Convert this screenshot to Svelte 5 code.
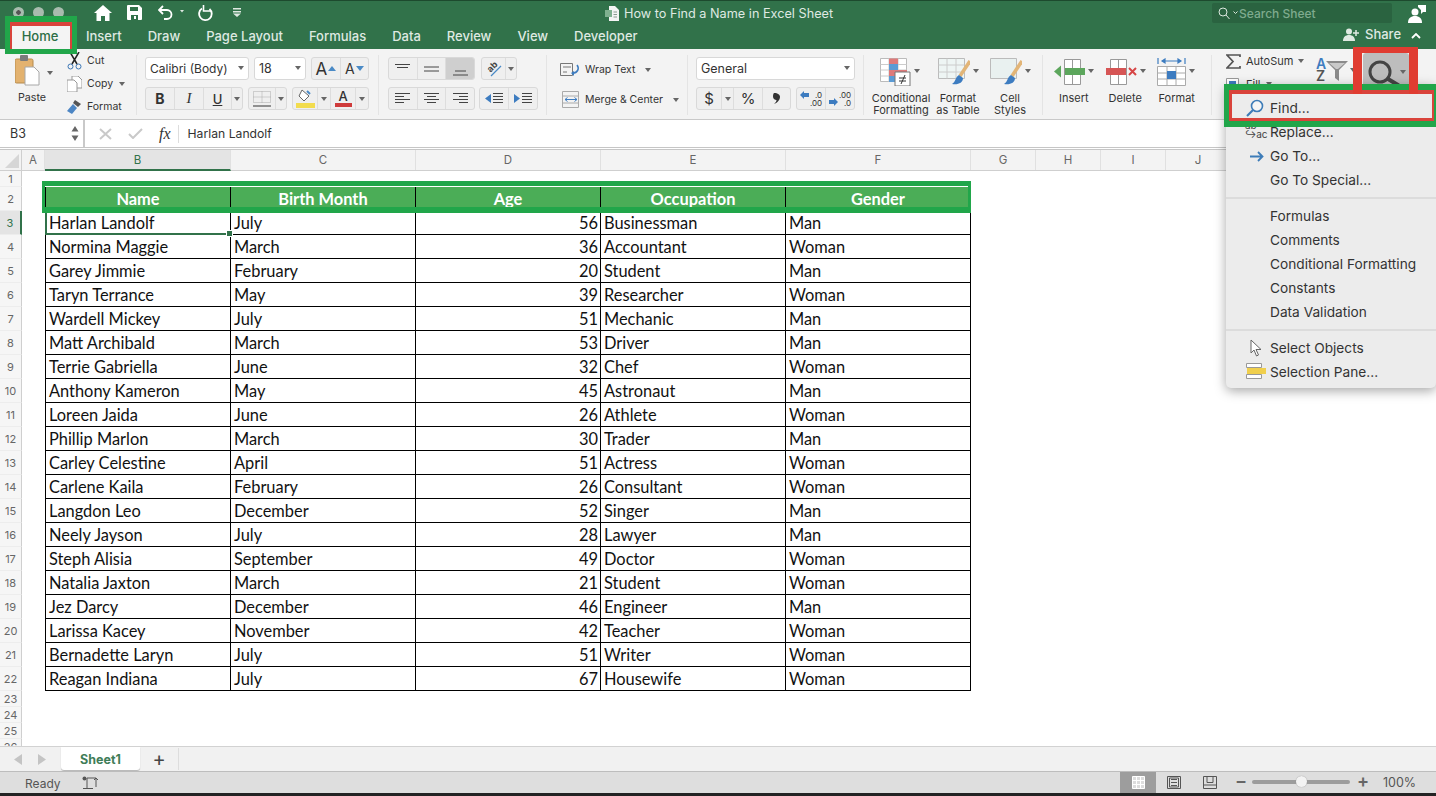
<script>
  const people = [
    ['Harlan Landolf','July',56,'Businessman','Man'],['Normina Maggie','March',36,'Accountant','Woman'],
    ['Garey Jimmie','February',20,'Student','Man'],['Taryn Terrance','May',39,'Researcher','Woman'],
    ['Wardell Mickey','July',51,'Mechanic','Man'],['Matt Archibald','March',53,'Driver','Man'],
    ['Terrie Gabriella','June',32,'Chef','Woman'],['Anthony Kameron','May',45,'Astronaut','Man'],
    ['Loreen Jaida','June',26,'Athlete','Woman'],['Phillip Marlon','March',30,'Trader','Man'],
    ['Carley Celestine','April',51,'Actress','Woman'],['Carlene Kaila','February',26,'Consultant','Woman'],
    ['Langdon Leo','December',52,'Singer','Man'],['Neely Jayson','July',28,'Lawyer','Man'],
    ['Steph Alisia','September',49,'Doctor','Woman'],['Natalia Jaxton','March',21,'Student','Woman'],
    ['Jez Darcy','December',46,'Engineer','Man'],['Larissa Kacey','November',42,'Teacher','Woman'],
    ['Bernadette Laryn','July',51,'Writer','Woman'],['Reagan Indiana','July',67,'Housewife','Woman']
  ];
  const heads = ['Name','Birth Month','Age','Occupation','Gender'];
  const tabs = ['Insert','Draw','Page Layout','Formulas','Data','Review','View','Developer'];
  const cols = [['A',23],['B',186],['C',185],['D',185],['E',185],['F',185],['G',65],['H',65],['I',65],['J',65]];
</script>

<div class="app">
  <header class="top">
    <div class="titlebar">
      <div class="lights"><i></i><i></i><i></i></div>
      <div class="qat">
        <svg width="18" height="16" viewBox="0 0 18 16"><path d="M9 0 0 8h2.500v8h4.500v-5h4v5h4.500V8H18z" fill="#fff"/></svg>
        <svg width="15" height="15" viewBox="0 0 15 15"><path d="M1 0h11l3 3v11a1 1 0 0 1-1 1H1a1 1 0 0 1-1-1V1a1 1 0 0 1 1-1z" fill="#fff"/><path d="M3 2h8v4H3zM4 10h7v5H4z" fill="#31724a"/><path d="M7 11h2v3H7z" fill="#fff"/></svg>
        <svg class="undo" width="26" height="15" viewBox="0 0 26 15"><path d="M5 1 1 5l4 4M1 5h8a4.500 4.500 0 0 1 0 9H6" fill="none" stroke="#fff" stroke-width="1.800"/><path d="M22 5h4l-2 2.500z" fill="#dfe9e2"/></svg>
        <svg class="redo" width="16" height="16" viewBox="0 0 16 16"><path d="M5 3.500A6.300 6.300 0 1 0 12.500 4" fill="none" stroke="#fff" stroke-width="1.800"/><path d="M6.500 0v7H14" fill="none" stroke="#fff" stroke-width="1.600" transform="translate(0 -1)"/></svg>
        <svg class="cust" width="8" height="9" viewBox="0 0 8 9"><path d="M0 0h8v1.500H0zM0 3h8v1.500H0zM0 5.500h8L4 9z" fill="#dfe9e2"/></svg>
      </div>
      <div class="doc-title">
        <svg width="14" height="15" viewBox="0 0 14 15"><path d="M4 0h6l4 4v11H4z" fill="#f4f4f4"/><path d="M0 4h7v7H0z" fill="#7fb08f"/><path d="M8.500 6h3.500M8.500 8.500h3.500M8.500 11h3.500" stroke="#8a9a90"/></svg>
        <span>How to Find a Name in Excel Sheet</span>
      </div>
      <div class="search">
        <svg width="14" height="13" viewBox="0 0 14 13"><circle cx="5" cy="5" r="4" fill="none" stroke="#dce8df" stroke-width="1"/><path d="m8 8 3.500 4" stroke="#dce8df"/></svg>
        <svg width="5" height="4" viewBox="0 0 5 4"><path d="m.5.500 2 2 2-2" fill="none" stroke="#dce8df"/></svg>
        <span>Search Sheet</span>
      </div>
      <svg class="person" width="19" height="19" viewBox="0 0 19 19"><circle cx="8" cy="8" r="3.500" fill="#fff"/><path d="M1 19c0-5 3-7 7-7s7 2 7 7z" fill="#fff"/><path d="M11 1h8v7h-3l-2 2V6l-3-3z" fill="#fff"/></svg>
    </div>
    <nav class="tabs">
      <span class="tab active">Home</span>
      {#each tabs as t}<span class="tab">{t}</span>{/each}
      <span class="share">
        <svg width="17" height="13" viewBox="0 0 17 13"><circle cx="6" cy="3.500" r="3" fill="#dfe9e2"/><path d="M0 13c0-4 2.500-6 6-6s6 2 6 6z" fill="#dfe9e2"/><path d="M13 2v6M10 5h6" stroke="#dfe9e2" stroke-width="1.500"/></svg>
        Share
      </span>
      <svg class="chev" width="10" height="6" viewBox="0 0 10 6"><path d="m1 5 4-4 4 4" fill="none" stroke="#fff" stroke-width="1.800"/></svg>
    </nav>
  </header>

  <section class="ribbon">
    <div class="group clip">
      <div class="paste">
        <svg width="25" height="31" viewBox="0 0 25 31"><rect x="0" y="4" width="18" height="24" rx="1.500" fill="#e3b26f" stroke="#b58a4d"/><rect x="5" y="0" width="8" height="6" rx="1" fill="#7b7b7b"/><path d="M10 12h9l5 5v13H10z" fill="#fff" stroke="#a8a8a8"/></svg>
        <i class="caret"></i>
        <span>Paste</span>
      </div>
      <div class="cliplist">
        <div><svg width="15" height="18" viewBox="0 0 15 18"><circle cx="3.500" cy="14.500" r="2.500" fill="none" stroke="#3b76b5"/><circle cx="11.500" cy="14.500" r="2.500" fill="none" stroke="#3b76b5"/><path d="M3 0l7 12M12 0 5 12" stroke="#222" stroke-width="1.500"/></svg><span>Cut</span></div>
        <div><svg width="15" height="16" viewBox="0 0 15 16"><path d="M5 0h6l4 4v8H5z" fill="#fff" stroke="#999"/><path d="M0 4h7l3 3v9H0z" fill="#fff" stroke="#999"/></svg><span>Copy</span><i class="caret"></i></div>
        <div><svg width="15" height="15" viewBox="0 0 15 15"><path d="M8 1l6 4-3 3-5-4z" fill="#555"/><path d="M6 5l4 4-5 6L0 12z" fill="#4d86c4"/></svg><span>Format</span></div>
      </div>
    </div>

    <div class="group font">
      <div class="line">
        <div class="select w-font"><span>Calibri (Body)</span><i class="caret"></i></div>
        <div class="select w-size"><span>18</span><i class="caret"></i></div>
        <div class="bg w58">
          <b class="btn grow a-up">A<svg width="8" height="5" viewBox="0 0 8 5"><path d="M4 0l4 5H0z" fill="#4a8ac6"/></svg></b>
          <b class="btn grow a-dn">A<svg width="8" height="5" viewBox="0 0 8 5"><path d="M4 5 8 0H0z" fill="#4a8ac6"/></svg></b>
        </div>
      </div>
      <div class="line">
        <div class="bg w98">
          <b class="btn w29 bold">B</b>
          <b class="btn w29 ital">I</b>
          <b class="btn w28 und">U</b>
          <b class="btn grow"><i class="caret"></i></b>
        </div>
        <div class="bg w39">
          <b class="btn w27"><svg width="18" height="16" viewBox="0 0 18 16"><path d="M.5.500h17v11H.500z M9 .500v11M.5 6h17" fill="none" stroke="#aaa" stroke-dasharray="1 1"/><path d="M0 15h18" stroke="#333" stroke-width="1.200"/></svg></b>
          <b class="btn grow"><i class="caret"></i></b>
        </div>
        <div class="bg w77">
          <b class="btn w25"><svg width="19" height="19" viewBox="0 0 19 19"><path d="M6 1l7 6-5 5-5-5z" fill="#fff" stroke="#666"/><path d="M11 2l3 3" stroke="#4a8ac6" stroke-width="2"/><path d="M0 14h19v5H0z" fill="#f2dc4e"/></svg></b>
          <b class="btn w13"><i class="caret"></i></b>
          <b class="btn w25 colorA">A<em class="red"></em></b>
          <b class="btn grow"><i class="caret"></i></b>
        </div>
      </div>
    </div>

    <div class="group align">
      <div class="line">
        <div class="bg w87">
          <b class="btn l3"><svg width="15" height="10" viewBox="0 0 15 10"><path d="M0 .500h15M2 3.500h11" stroke="#444"/></svg></b>
          <b class="btn l3"><svg width="15" height="8" viewBox="0 0 15 8"><path d="M0 2h15M0 6h15" stroke="#444"/></svg></b>
          <b class="btn l3 on"><svg width="15" height="14" viewBox="0 0 15 14"><path d="M2 9h11M0 13h15" stroke="#444"/></svg></b>
        </div>
        <div class="bg w36">
          <b class="btn w24"><svg width="18" height="17" viewBox="0 0 18 17"><text x="2" y="10" font-size="9" font-family="Inter" fill="#444" transform="rotate(-45 7 7)">ab</text><path d="M6 16 16 6" stroke="#4a8ac6" stroke-width="1.200"/></svg></b>
          <b class="btn grow"><i class="caret"></i></b>
        </div>
      </div>
      <div class="line">
        <div class="bg w87">
          <b class="btn l3"><svg width="15" height="11" viewBox="0 0 15 11"><path d="M0 .500h15M0 3.500h9M0 6.500h15M0 9.500h9" stroke="#444"/></svg></b>
          <b class="btn l3"><svg width="15" height="11" viewBox="0 0 15 11"><path d="M0 .500h15M3 3.500h9M0 6.500h15M3 9.500h9" stroke="#444"/></svg></b>
          <b class="btn l3"><svg width="15" height="11" viewBox="0 0 15 11"><path d="M0 .500h15M6 3.500h9M0 6.500h15M6 9.500h9" stroke="#444"/></svg></b>
        </div>
        <div class="bg w59b">
          <b class="btn w29"><svg width="18" height="11" viewBox="0 0 18 11"><path d="M0 5.500 6 1v9z" fill="#3d7cc0"/><path d="M8 .500h10M8 3.500h10M8 6.500h10M8 9.500h10" stroke="#444"/></svg></b>
          <b class="btn grow"><svg width="18" height="11" viewBox="0 0 18 11"><path d="M6 5.500 0 1v9z" fill="#3d7cc0"/><path d="M8 .500h10M8 3.500h10M8 6.500h10M8 9.500h10" stroke="#444"/></svg></b>
        </div>
      </div>
    </div>

    <div class="group wrap">
      <div class="wrapline">
        <svg width="21" height="14" viewBox="0 0 21 14"><path d="M.5.500h12v12H.500zM3 4h8M3 9h4" fill="none" stroke="#777"/><path d="M17 2c3 4 0 8-4 8" fill="none" stroke="#3d7cc0" stroke-width="1.500"/><path d="M11 10l3-2v5z" fill="#3d7cc0"/></svg>
        <span>Wrap Text</span><i class="caret"></i>
      </div>
      <div class="wrapline">
        <svg width="21" height="17" viewBox="0 0 21 17"><path d="M.5.500h16v16H.500zM.5 5h16M.5 12h16" fill="none" stroke="#aaa" transform="translate(2 0)"/><path d="M5 8.500h12M5 8.500l2.500-2M5 8.500l2.500 2M17 8.500l-2.500-2M17 8.500l-2.500 2" fill="none" stroke="#3d7cc0"/></svg>
        <span>Merge &amp; Center</span><i class="caret"></i>
      </div>
    </div>

    <div class="group number">
      <div class="line">
        <div class="select w-gen"><span>General</span><i class="caret"></i></div>
      </div>
      <div class="line">
        <div class="bg w95">
          <b class="btn w25 light">$</b>
          <b class="btn w12"><i class="caret"></i></b>
          <b class="btn w29 light">%</b>
          <b class="btn grow"><svg width="7" height="11" viewBox="0 0 7 11"><path d="M1 0c4 0 6 2 6 4 0 3-3 6-6 7 2-2 2.500-3 2.500-4C1.500 7 0 5.500 0 3.500 0 1.500.5.500 1 0z" fill="#333"/></svg></b>
        </div>
        <div class="bg w59c">
          <b class="btn grow dec"><svg width="9" height="8" viewBox="0 0 9 8"><path d="M0 4 4 0v2h5v4H4v2z" fill="#3d7cc0"/></svg><span>.0<br/>.00</span></b>
          <b class="btn grow dec"><svg class="down7" width="9" height="8" viewBox="0 0 9 8"><path d="M9 4 5 0v2H0v4h5v2z" fill="#3d7cc0"/></svg><span>.00<br/>.0</span></b>
        </div>
      </div>
    </div>

    <div class="group bigs styles">
      <div class="big">
        <div class="ic">
          <svg width="31" height="28" viewBox="0 0 31 28"><path d="M.5.500h26v23H.500z" fill="#fff" stroke="#bbb"/><path d="M9 .500v23M18 .500v23M.5 6.500h26M.5 12h26M.5 18h26" stroke="#ccc"/><path d="M9 .500h9V6H9z" fill="#de7a7a"/><path d="M9 6h9v6H9z" fill="#5b9bd5"/><path d="M9 12h18v6H9z" fill="#de7a7a"/><path d="M9 18h9v6H9z" fill="#5b9bd5"/><path d="M15 14h15v14H15z" fill="#fff" stroke="#777"/><path d="M19 20h7M19 23h7M25 17l-4 9" stroke="#333" fill="none"/></svg>
          <i class="caret"></i>
        </div>
        <span>Conditional<br/>Formatting</span>
      </div>
      <div class="big">
        <div class="ic">
          <svg width="32" height="28" viewBox="0 0 32 28"><path d="M.5.500h26v20H.500z" fill="#eef5f4" stroke="#bbb"/><path d="M9 .500v20M18 .500v20M.5 7h26M.5 14h26" stroke="#ccc"/><path d="M32 3 22 18" stroke="#e2b577" stroke-width="3.500"/><path d="M21 17c-4 2-3 7-7 9 6 1 11-1 11-6z" fill="#3d7cc0"/></svg>
          <i class="caret"></i>
        </div>
        <span>Format<br/>as Table</span>
      </div>
      <div class="big">
        <div class="ic">
          <svg width="32" height="28" viewBox="0 0 32 28"><path d="M.5.500h26v20H.500z" fill="#e9f1f0" stroke="#bbb"/><path d="M32 3 22 18" stroke="#e2b577" stroke-width="3.500"/><path d="M21 17c-4 2-3 7-7 9 6 1 11-1 11-6z" fill="#3d7cc0"/></svg>
          <i class="caret"></i>
        </div>
        <span>Cell<br/>Styles</span>
      </div>
    </div>

    <div class="group bigs cells">
      <div class="big">
        <div class="ic">
          <svg width="31" height="26" viewBox="0 0 31 26"><path d="M10.500.500h16v25h-16z M18.500.500v25" fill="#fff" stroke="#999"/><path d="M11 9h20v7H11z" fill="#5ca65c"/><path d="M0 12.500 7 6.500v12z" fill="#5ca65c"/></svg>
          <i class="caret"></i>
        </div>
        <span>Insert</span>
      </div>
      <div class="big">
        <div class="ic">
          <svg width="31" height="26" viewBox="0 0 31 26"><path d="M4.500.500h16v25h-16z M12.500.500v25" fill="#fff" stroke="#999"/><path d="M0 9h20v7H0z" fill="#d65555"/><path d="m23 9 7 7m0-7-7 7" stroke="#d64545" stroke-width="2"/></svg>
          <i class="caret"></i>
        </div>
        <span>Delete</span>
      </div>
      <div class="big">
        <div class="ic">
          <svg width="29" height="28" viewBox="0 0 29 28"><path d="M.5 8.500h28v19H.500zM10 8.500v19M19 8.500v19M.5 15h28M.5 21h28" fill="#fff" stroke="#aaa"/><path d="M10 13h9v8h-9z" fill="#3d7cc0"/><path d="M1 0v6M28 0v6M5 3h19M5 3l3-2v4zM24 3l-3-2v4z" stroke="#3d7cc0" stroke-width="1.200" fill="#3d7cc0"/></svg>
          <i class="caret"></i>
        </div>
        <span>Format</span>
      </div>
    </div>

    <div class="group editing">
      <div class="editcol">
        <div class="auto"><svg width="15" height="15" viewBox="0 0 15 15"><path d="M14 3V1H1l6 6.500L1 14h13v-2" fill="none" stroke="#555" stroke-width="1.700"/></svg><span>AutoSum</span><i class="caret"></i></div>
        <div class="auto"><svg width="15" height="13" viewBox="0 0 15 13"><path d="M.5.500h12v12H.500z" fill="#fff" stroke="#999"/><path d="M3 3h7v3H3z" fill="#3d7cc0"/></svg><span>Fill</span><i class="caret"></i></div>
      </div>
      <div class="sort">
        <span class="az"><em>A</em><em class="z">Z</em></span>
        <svg width="22" height="20" viewBox="0 0 22 20"><path d="M0 0h22l-9 9v11l-4-3V9z" fill="#8a8a8a"/><path d="M3 2h16l-7 6h-2z" fill="#c9c9c9"/></svg>
        <i class="caret"></i>
      </div>
      <div class="findbtn">
        <svg width="32" height="26" viewBox="0 0 32 26"><circle cx="12" cy="12" r="10" fill="none" stroke="#444" stroke-width="3"/><path d="m20 19 10 6" stroke="#444" stroke-width="4" stroke-linecap="round"/></svg>
        <i class="caret"></i>
      </div>
    </div>
  </section>

  <div class="fbar">
    <div class="namebox"><span>B3</span>
      <svg width="8" height="15" viewBox="0 0 8 15"><path d="M4 0l3.500 5.500h-7zM4 15 .5 9.500h7z" fill="#666"/></svg>
    </div>
    <svg class="fx-i" width="13" height="12" viewBox="0 0 13 12"><path d="m1 1 11 10m0-10L1 11" stroke="#c9c9c9" stroke-width="2"/></svg>
    <svg class="fx-j" width="15" height="11" viewBox="0 0 15 11"><path d="m1 6 4 4 9-9" fill="none" stroke="#c9c9c9" stroke-width="2"/></svg>
    <span class="fx">fx</span>
    <span class="ftext">Harlan Landolf</span>
  </div>

  <main class="sheet">
    <div class="colheads">
      <div class="corner"><svg width="14" height="14" viewBox="0 0 14 14"><path d="M14 0v14H0z" fill="#d6d6d6"/></svg></div>
      {#each cols as [c, w]}
        <div class="colh" class:sel={c === 'B'} style="width:{w}px">{c}</div>
      {/each}
    </div>

    <div class="row short"><div class="rowh">1</div></div>
    <div class="row"><div class="rowh">2</div><div class="a"></div>
      {#each heads as h, i}<div class="cell head" class:first={i === 0}>{h}</div>{/each}
    </div>
    {#each people as p, i}
      <div class="row">
        <div class="rowh" class:sel={i === 0}>{i + 3}</div><div class="a"></div>
        <div class="cell first" class:active={i === 0}>{p[0]}{#if i === 0}<i class="handle"></i>{/if}</div>
        <div class="cell">{p[1]}</div>
        <div class="cell num">{p[2]}</div>
        <div class="cell">{p[3]}</div>
        <div class="cell">{p[4]}</div>
      </div>
    {/each}
    <div class="row short"><div class="rowh">23</div></div>
    <div class="row short"><div class="rowh">24</div></div>
    <div class="row short"><div class="rowh">25</div></div>
    <div class="row short"><div class="rowh">26</div></div>
  </main>

  <div class="sheettabs">
    <svg width="9" height="11" viewBox="0 0 9 11" class="nav1"><path d="M8 0v11L0 5.500z" fill="#c4c4c4"/></svg>
    <svg width="9" height="11" viewBox="0 0 9 11" class="nav2"><path d="M1 0v11l8-5.500z" fill="#c4c4c4"/></svg>
    <div class="sheettab">Sheet1</div>
    <div class="plus">+</div>
  </div>

  <footer class="status">
    <span class="ready">Ready</span>
    <svg class="macro" width="16" height="14" viewBox="0 0 16 14"><circle cx="2.500" cy="2.500" r="2" fill="#555"/><path d="M5 2h9v9M5 2v10M1 12.500h10" fill="none" stroke="#555"/><path d="m12 4 2-2 2 2" fill="none" stroke="#555"/></svg>
    <div class="views">
      <span class="view on"><svg width="13" height="13" viewBox="0 0 13 13"><path d="M.5.500h12v12H.500zM4.500.500v12M8.500.500v12M.5 4.500h12M.5 8.500h12" fill="#ddd" stroke="#fff"/></svg></span>
      <span class="view"><svg width="14" height="13" viewBox="0 0 14 13"><path d="M.5.500h13v12H.500zM4 3.500h6M4 6.500h6M4 9.500h6M2.500 2v9h9V2z" fill="none" stroke="#555"/></svg></span>
      <span class="view"><svg width="14" height="13" viewBox="0 0 14 13"><path d="M.5.500h13v12H.500zM4 .500v6h6v-6M.5 9h13" fill="none" stroke="#555"/></svg></span>
    </div>
    <span class="zm minus">−</span>
    <div class="slider"><i></i></div>
    <span class="zm plusz">+</span>
    <span class="pct">100%</span>
  </footer>
  <div class="blackbar"></div>

  <div class="menu">
    <div class="mi find"><svg class="mic" width="18" height="18" viewBox="0 0 18 18"><circle cx="11" cy="7" r="5.500" fill="#f5f5f5" stroke="#3d7cb8" stroke-width="1.600"/><path d="M7 11 1 17" stroke="#3d7cb8" stroke-width="2.200"/></svg>Find...</div>
    <div class="mi"><span class="abac">ab<br/>↪ac</span>Replace...</div>
    <div class="mi"><svg class="mic goto" width="14" height="11" viewBox="0 0 14 11"><path d="M0 5.500h12M8 1l4.500 4.500L8 10" fill="none" stroke="#3d7cb8" stroke-width="1.800"/></svg>Go To...</div>
    <div class="mi">Go To Special...</div>
    <div class="sep"></div>
    <div class="mi">Formulas</div>
    <div class="mi">Comments</div>
    <div class="mi">Conditional Formatting</div>
    <div class="mi">Constants</div>
    <div class="mi">Data Validation</div>
    <div class="sep"></div>
    <div class="mi"><svg class="mic sel-o" width="12" height="18" viewBox="0 0 12 18"><path d="M1 1v13l3-3 2.500 6 2-1-2.500-5.500H11z" fill="#fff" stroke="#666"/></svg>Select Objects</div>
    <div class="mi"><svg class="mic sel-p" width="20" height="16" viewBox="0 0 20 16"><path d="M.5.500h15v4h-15zM.5 11.500h15v4h-15z" fill="#fff" stroke="#999"/><path d="M1 5h19v6H1z" fill="#f0cf4d"/></svg>Selection Pane...</div>
  </div>

  <div class="mark home-g"></div>
  <div class="mark home-r"></div>
  <div class="mark find-g"></div>
  <div class="mark find-r"></div>
  <div class="mark search-r"></div>
  <div class="mark head-g"></div>
</div>

<style>
  :global(body){margin:0;background:#fff;overflow:hidden}
  .app{position:relative;width:1436px;height:796px;overflow:hidden;font-family:Inter,"Noto Sans",sans-serif;color:#333;display:flex;flex-direction:column}
  svg{display:block;flex:none}
  .top{height:49px;background:#31724a;color:#dfe9e2;flex:none;position:relative;border-top:1px solid #1d4a2e;box-sizing:border-box}
  .titlebar{height:23px;display:flex;align-items:center;position:relative}
  .lights{display:flex;gap:9px;margin-left:13px}
  .lights i{width:11px;height:11px;border-radius:50%;background:#a8bcae}
  .lights i:first-child{background:radial-gradient(circle,#555 0 2px,#a8bcae 2.500px)}
  .qat{display:flex;align-items:center;margin-left:30px}
  .qat svg:nth-child(2){margin-left:15px}
  .qat .undo{margin-left:16px}
  .qat .redo{margin-left:13px}
  .qat .cust{margin-left:20px}
  .doc-title{position:absolute;left:605px;top:5px;display:flex;gap:5px;align-items:center;font-size:12.700px;white-space:nowrap}
  .search{position:absolute;left:1212px;top:2px;width:180px;height:20px;background:#2a6340;border-radius:2px;display:flex;align-items:center;box-sizing:border-box;padding-left:6px;gap:1px;font-size:12px;font-weight:500;color:#7fab8e}
  .person{position:absolute;left:1407px;top:3px}
  .tabs{height:25px;display:flex;align-items:flex-start;font-size:13px;font-weight:500;padding-left:10px;position:relative}
  .tab{padding:0 11px;line-height:24px;white-space:nowrap}
  .tab:nth-child(n+2){margin-right:4px}
  .tab:nth-child(2){padding-left:14px}
  .tab.active{background:#f4f4f4;color:#2d6e46;width:40px;height:25px;text-align:center;margin-right:0;padding:0 12px 0 10px}
  .share{position:absolute;left:1343px;top:2px;display:flex;gap:5px;align-items:center;font-size:13px}
  .chev{position:absolute;left:1411px;top:9px}

  .ribbon{height:71px;flex:none;background:#f3f3f3;border-bottom:1px solid #c9c9c9;box-sizing:border-box;display:flex;font-size:11px;color:#333}
  .group{height:60px;margin-top:6px;border-right:1px solid #e4e4e4;box-sizing:border-box;flex:none;padding-top:2px}
  .caret{display:inline-block;width:0;height:0;border:3px solid transparent;border-top:4px solid #666;border-bottom:0;flex:none}
  .line{display:flex;gap:5px;height:23px;margin-bottom:7px}
  .select{background:#fff;border:1px solid #d8d8d8;border-radius:3px;box-sizing:border-box;height:23px;display:flex;align-items:center;justify-content:space-between;padding:0 4px 1px;font-size:12.500px;color:#333}
  .w-font{width:104px;font-size:12px}
  .w-size{width:52px}
  .w-gen{width:159px}
  .bg{display:flex;height:23px;border:1px solid #d9d9d9;border-radius:3px;box-sizing:border-box;background:#efefef;overflow:hidden}
  .w58{width:58px}.w98{width:98px}.w39{width:39px}.w77{width:77px}.w87{width:87px}.w95{width:95px}
  .w36{width:36px;margin-left:6px}
  .w59b{width:59px;margin-left:4px}
  .w59c{width:59px;margin-left:5px}
  .btn{display:flex;align-items:center;justify-content:center;height:100%;border-right:1px solid #dddddd;box-sizing:border-box;font-size:13px;color:#333;font-weight:700;flex:none;gap:1px}
  .btn.w12{width:12px}.btn.w13{width:13px}.btn.w24{width:24px}.btn.w25{width:25px}.btn.w27{width:27px}.btn.w28{width:28px}.btn.w29{width:29px}
  .btn:last-child{border-right:0}
  .btn.grow{flex:1}
  .btn.l3{flex:1}
  .btn.on{background:#cfcfcf}
  .a-up{font-size:17px;font-weight:400}
  .a-dn{font-size:14px;font-weight:400}
  .bold{font-size:14px}
  .ital{font-family:"Liberation Serif",serif;font-size:15px;font-style:italic;font-weight:400}
  .und{font-weight:500;text-decoration:underline}
  .colorA{flex-direction:column;font-weight:500;line-height:12px}
  .light{font-weight:400;font-size:15px}
  .red{display:block;width:17px;height:4px;background:#cf3b3b}
  .dec{font-weight:400;font-size:8px;line-height:8px;align-items:flex-start;padding-top:3px}
  .dec span{text-align:right}
  .down7{margin-top:7px}

  .clip{width:137px;display:flex;padding-top:0}
  .paste{width:64px;position:relative;padding-left:15px;box-sizing:border-box;flex:none}
  .paste .caret{position:absolute;left:47px;top:16px}
  .paste span{position:absolute;left:18px;top:36px;font-size:10.700px}
  .cliplist{display:flex;flex-direction:column;margin-left:3px;margin-top:-6px;font-size:10.500px}
  .cliplist div{display:flex;align-items:center;height:23px;gap:5px;flex:none}
  .cliplist .caret{margin-left:1px}
  .font{width:242px;padding-left:8px}
  .align{width:168px;padding-left:9px}
  .align .line{gap:0}
  .wrap{width:141px;padding-left:13px;padding-top:3px}
  .wrapline{height:23px;margin-bottom:7px;display:flex;align-items:center;gap:4px;white-space:nowrap;font-size:10.500px}
  .wrapline .caret{margin-left:6px}
  .number{width:176px;padding-left:8px}
  .number .line{gap:0}
  .bigs{display:flex;padding-top:0}
  .styles{width:179px;padding-left:10px}
  .cells{width:169px;padding-left:5px}
  .big{width:51.500px;display:flex;flex-direction:column;align-items:center;text-align:center;line-height:12px;white-space:nowrap;flex:none}
  .styles .big{width:52px}
  .styles .big:first-child{width:54px;margin-right:4px}
  .ic{height:37px;flex:none;width:100%;display:flex;box-sizing:border-box;padding-left:6px;gap:3px;align-items:center}
  .ic svg{margin-top:-4px}
  .ic .caret{margin-top:-6px}
  .editing{flex:1;position:relative;border:0;padding:0}
  .editcol{position:absolute;left:14px;top:-5px}
  .auto{display:flex;align-items:center;gap:5px;height:22px;margin-bottom:1px}
  .sort{position:absolute;left:104px;top:3px;display:flex;align-items:flex-start}
  .az{display:flex;flex-direction:column;font-size:14px;line-height:12px;font-weight:600}
  .az em{font-style:normal;color:#3d7cc0}
  .az .z{color:#555}
  .sort .caret{margin-left:2px;margin-top:10px}
  .sort svg{margin-top:3px}
  .findbtn{position:absolute;left:151px;top:-2px;width:46px;height:36px;background:#bdbdbd;border-radius:3px;display:flex;align-items:flex-start;padding:7px 0 0 5px;box-sizing:border-box}
  .findbtn .caret{margin-top:10px}

  .fbar{height:27px;flex:none;display:flex;align-items:center;border-bottom:3px double #c6c6c6;background:#fff}
  .namebox{width:85px;height:100%;border-right:2px solid #c9c9c9;display:flex;align-items:center;justify-content:space-between;padding:0 4px 0 10px;box-sizing:border-box;font-size:12.500px}
  .fx-i{margin-left:14px}
  .fx-j{margin-left:16px}
  .fx{font-family:"Liberation Serif",serif;font-style:italic;font-size:16px;margin-left:16px;padding-right:7px;border-right:1px solid #ddd;line-height:18px}
  .ftext{margin-left:9px;font-size:12.200px}

  .sheet{flex:1;min-height:0;overflow:hidden;background:#fff}
  .colheads{display:flex;height:21px;background:#f3f3f3;border-bottom:1px solid #cfcfcf;box-sizing:border-box;font-size:11.500px;color:#666}
  .corner{width:22px;border-right:1px solid #cfcfcf;box-sizing:border-box;display:flex;align-items:flex-end;padding:0 0 2px 5px}
  .colh{box-sizing:border-box;border-right:1px solid #e0e0e0;text-align:center;line-height:20px}
  .colh.sel{background:#e4e4e4;border-bottom:2px solid #31724a;color:#31724a;height:21px}
  .row{display:flex;height:24px}
  .short{height:16px}
  .rowh{width:22px;flex:none;box-sizing:border-box;border-right:1px solid #cfcfcf;border-bottom:1px solid #ededed;background:#f6f6f6;color:#666;font-size:11px;display:flex;align-items:center;justify-content:center}
  .rowh.sel{background:#e4e4e4;border-right:2px solid #31724a;color:#31724a}
  .a{width:23px;flex:none}
  .cell{width:185px;flex:none;box-sizing:border-box;border-right:1px solid #000;border-bottom:1px solid #000;font-family:Lato,sans-serif;font-size:16.400px;line-height:24px;padding-left:3px;color:#111;position:relative;white-space:nowrap}
  .cell.first{border-left:1px solid #000;width:186px}
  .cell.num{text-align:right;padding:0 2px 0 0}
  .cell.head{background:#4bad57;color:#fff;font-weight:700;text-align:center;padding:0}
  .cell.active{box-shadow:inset 1px -1px 0 #31724a;border-bottom-color:#31724a;border-left-color:#31724a}
  .handle{position:absolute;right:-3px;bottom:-3px;width:5px;height:5px;background:#31724a;border:1px solid #fff;z-index:1}

  .sheettabs{height:26px;flex:none;background:#f1f1f1;border-top:1px solid #d2d2d2;box-sizing:border-box;display:flex;align-items:center;position:relative;border-bottom:1px solid #bdbdbd}
  .nav1{margin-left:14px}
  .nav2{margin-left:14px}
  .sheettab{margin-left:15px;width:79px;height:23px;background:#fff;border-radius:0 0 3px 3px;box-shadow:0 1px 1px #b5b5b5;text-align:center;font-size:12.500px;font-weight:700;color:#3f7d58;line-height:25px;align-self:flex-start}
  .plus{width:38px;text-align:center;font-size:20px;color:#444;border-right:1px solid #ddd;line-height:22px;height:22px}
  .status{height:21px;flex:none;background:#dedede;display:flex;align-items:center;font-size:12px;color:#555;position:relative}
  .ready{margin-left:25px;padding-top:1px}
  .macro{margin-left:21px}
  .views{position:absolute;left:1120px;top:0;height:21px;display:flex}
  .view{width:36px;height:21px;display:flex;align-items:center;justify-content:center}
  .view.on{background:#9d9d9d}
  .zm{position:absolute;font-size:18px;font-weight:600;color:#666;top:-2px}
  .minus{left:1235px}
  .plusz{left:1357px}
  .slider{position:absolute;left:1252px;top:8px;width:98px;height:4px;border-radius:2px;background:#9c9c9c}
  .slider i{position:absolute;left:44px;top:-4px;width:11px;height:11px;border-radius:50%;background:#f3f3f3;box-shadow:0 0 1px #888}
  .pct{position:absolute;left:1383px;top:3px;font-size:12.500px}
  .blackbar{height:3px;flex:none;background:#232323}

  .menu{position:absolute;left:1226px;top:84px;width:210px;height:304px;box-sizing:border-box;padding-top:12px;background:#ececec;border-radius:5px;box-shadow:0 3px 12px rgba(0,0,0,.35);font-size:13.700px;color:#333}
  .mi{height:24px;line-height:24px;padding-left:44px;position:relative;white-space:nowrap}
  .mic{position:absolute;left:20px;top:3px}
  .goto{left:24px;top:7px}
  .sel-o{left:24px}
  .sel-p{left:20px}
  .abac{position:absolute;left:19px;top:1px;font-size:10px;line-height:9px;color:#444;letter-spacing:-.2px}
  .sep{height:2px;background:#dcdcdc;margin:5px 0;width:100%}

  .mark{position:absolute;box-sizing:border-box;pointer-events:none}
  .home-g{left:5px;top:16px;width:72px;height:38px;border:5px solid #21a64a;border-top-width:6px}
  .home-r{left:10px;top:22px;width:62px;height:27px;border:2px solid #d9433b;border-top-width:4px;border-bottom:0}
  .find-g{left:1224px;top:84px;width:212px;height:43px;border:6px solid #21a64a;border-left-width:5px;border-right-width:2px}
  .find-r{left:1229px;top:90px;width:205px;height:31px;border:3px solid #d9433b;border-top-width:4px;border-right-width:2px}
  .search-r{left:1353px;top:47px;width:65px;height:47px;border:9px solid #e03c31;border-top-width:6px;border-bottom-width:0}
  .head-g{left:42px;top:181px;width:929px;height:32px;border:3px solid #21a64a;border-top-width:5px;border-bottom-width:6px}
</style>
